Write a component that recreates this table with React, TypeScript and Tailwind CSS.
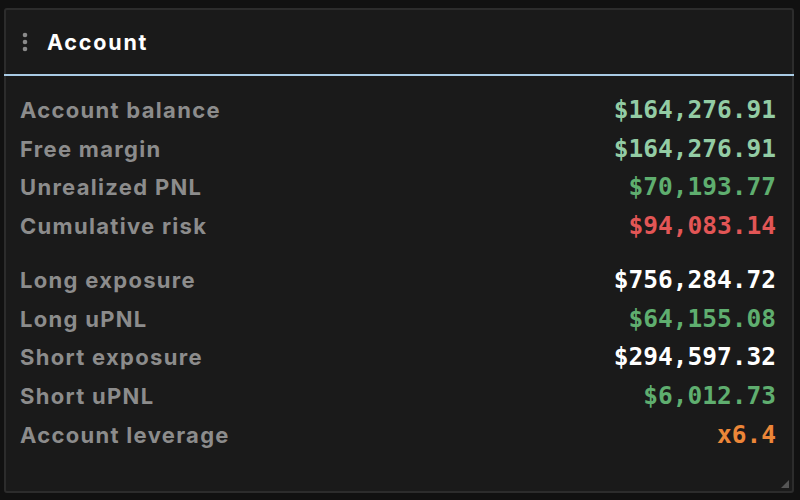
const rows1 = [
  { label: "Account balance", value: "$164,276.91", color: "text-[#93cca4]" },
  { label: "Free margin", value: "$164,276.91", color: "text-[#93cca4]" },
  { label: "Unrealized PNL", value: "$70,193.77", color: "text-[#5fae6f]" },
  { label: "Cumulative risk", value: "$94,083.14", color: "text-[#e25656]" },
]

const rows2 = [
  { label: "Long exposure", value: "$756,284.72", color: "text-white" },
  { label: "Long uPNL", value: "$64,155.08", color: "text-[#5fae6f]" },
  { label: "Short exposure", value: "$294,597.32", color: "text-white" },
  { label: "Short uPNL", value: "$6,012.73", color: "text-[#5fae6f]" },
  { label: "Account leverage", value: "x6.4", color: "text-[#ec8638]" },
]

const Row = ({ label, value, color }: { label: string; value: string; color: string }) => (
  <div className="flex items-center justify-between h-[38.7px]">
    <span className="text-[#8c8c8c] text-[22px] font-bold font-['Inter',sans-serif] tracking-[1.3px]">
      {label}
    </span>
    <span className={`${color} text-[24.5px] font-bold font-['DejaVu_Sans_Mono',monospace]`}>
      {value}
    </span>
  </div>
)

export default function App() {
  return (
    <div className="w-[800px] h-[500px] bg-[#111111] pt-[8px] pl-[4px] pr-[6px] pb-[7px]">
      <div className="relative h-full flex flex-col bg-[#1a1a1a] border-2 border-[#2c2c2c] rounded-[3px]">
        <div className="flex items-center h-[64px] pl-[16px] gap-[19px]">
          <svg width="6" height="20" viewBox="0 0 6 20" aria-hidden="true">
            <circle cx="3" cy="3" r="2.3" fill="#8a8a8a" />
            <circle cx="3" cy="10" r="2.3" fill="#8a8a8a" />
            <circle cx="3" cy="17" r="2.3" fill="#8a8a8a" />
          </svg>
          <h2 className="text-white text-[21.5px] font-bold font-['Inter',sans-serif] tracking-[1.8px]">
            Account
          </h2>
        </div>
        <div className="h-[2px] bg-[#a9cbe4] -mx-[2px]" />
        <div className="flex flex-col pl-[14px] pr-[16px] pt-[15px]">
          {rows1.map((r) => (
            <Row key={r.label} {...r} />
          ))}
          <div className="h-[15.3px]" />
          {rows2.map((r) => (
            <Row key={r.label} {...r} />
          ))}
        </div>
        <svg
          className="absolute right-[3px] bottom-[3px]"
          width="8"
          height="8"
          viewBox="0 0 8 8"
          aria-hidden="true"
        >
          <path d="M8 0 L8 8 L0 8 Z" fill="#555" />
        </svg>
      </div>
    </div>
  )
}
